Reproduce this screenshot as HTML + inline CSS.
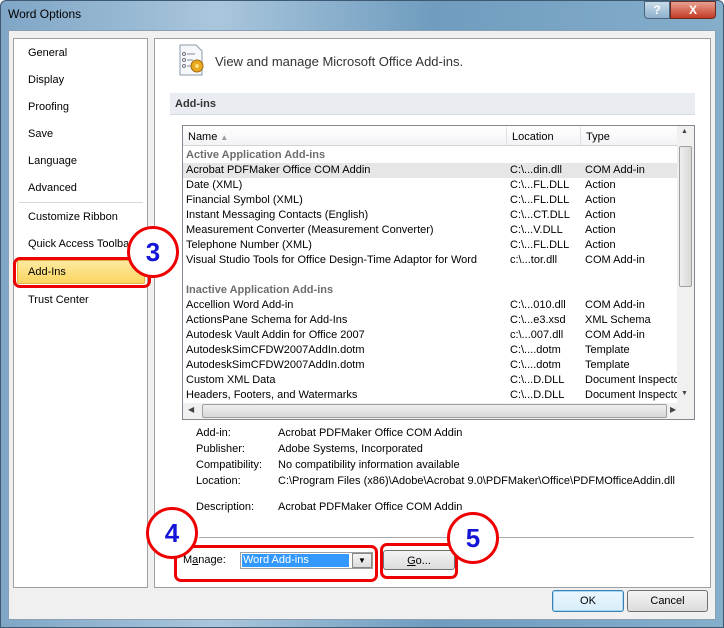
<!DOCTYPE html><html><head><style>
*{margin:0;padding:0;box-sizing:border-box}
body{width:724px;height:628px;overflow:hidden;font-family:"Liberation Sans",sans-serif;font-size:11px;color:#000;position:relative;background:#fff}
.a{position:absolute}
.frame{left:0;top:0;width:724px;height:628px;background:linear-gradient(90deg,#7fa6c6,#a9c6dc 30%,#6f9cbf 60%,#85aecb);border:1px solid #3d5a72;border-radius:6px 6px 0 0}
.inner{left:8px;top:30px;width:708px;height:590px;background:#f0f0f0;border:1px solid #8aa0b4}
.panel{background:#fff;border:1px solid #a0a0a0}
.nav{left:28px;font-size:11px}
.row{position:absolute;left:186px;height:15px;line-height:15px;white-space:nowrap}
.loc{position:absolute;left:510px}
.typ{position:absolute;left:585px}
.circle{width:52px;height:52px;border:3px solid #e00;border-radius:50%;background:#fff;color:#1515d8;font:bold 26px "Liberation Sans",sans-serif;text-align:center;line-height:46px}
.btn{border:1px solid #707070;border-radius:3px;background:linear-gradient(#f4f4f4,#dcdcdc);text-align:center;line-height:20px}
.redbox{border:3px solid #e00;border-radius:7px}
</style></head><body>
<div class="a frame"></div>
<div class="a" style="left:8px;top:7px;font-size:12px">Word Options</div>
<div class="a" style="left:644px;top:1px;width:26px;height:18px;border:1px solid #4a6580;border-radius:0 0 0 4px;background:linear-gradient(#c8dbea,#8eb0cc);color:#fff;text-align:center;font-weight:bold;font-size:12px;line-height:16px">?</div>
<div class="a" style="left:670px;top:1px;width:46px;height:18px;border:1px solid #6b2a20;border-radius:0 0 4px 0;background:linear-gradient(#e8a090,#c43b24);color:#fff;text-align:center;font-weight:bold;font-size:12px;line-height:16px">X</div>
<div class="a inner"></div>
<div class="a panel" style="left:13px;top:38px;width:135px;height:550px"></div>
<div class="a panel" style="left:154px;top:38px;width:557px;height:550px"></div>
<div class="a nav" style="top:47px">General</div>
<div class="a nav" style="top:74px">Display</div>
<div class="a nav" style="top:101px">Proofing</div>
<div class="a nav" style="top:128px">Save</div>
<div class="a nav" style="top:155px">Language</div>
<div class="a nav" style="top:182px">Advanced</div>
<div class="a" style="left:19px;top:202px;width:124px;border-top:1px solid #d8d8d8"></div>
<div class="a nav" style="top:211px">Customize Ribbon</div>
<div class="a nav" style="top:238px;width:100px;overflow:hidden;white-space:nowrap">Quick Access Toolbar</div>
<div class="a" style="left:17px;top:260px;width:128px;height:24px;border:1px solid #e0b040;border-radius:2px;background:linear-gradient(#fde9a0,#fbd560)"></div>
<div class="a nav" style="top:266px">Add-Ins</div>
<div class="a redbox" style="left:13px;top:257px;width:138px;height:31px"></div>
<div class="a nav" style="top:294px">Trust Center</div>
<svg class="a" style="left:178px;top:44px" width="30" height="32"><path d="M2 1h16l6 6v24H2z" fill="#f6f8fb" stroke="#8a99aa"/><circle cx="6" cy="10" r="1.5" fill="none" stroke="#778"/><circle cx="6" cy="16" r="1.5" fill="none" stroke="#778"/><circle cx="6" cy="22" r="1.5" fill="none" stroke="#778"/><path d="M9 10h8M9 16h6M9 22h4" stroke="#889"/><circle cx="19" cy="22" r="6" fill="#e8a820" stroke="#a06a10"/><circle cx="19" cy="22" r="2" fill="#fde080"/></svg>
<div class="a" style="left:215px;top:54px;font-size:13px;color:#333">View and manage Microsoft Office Add-ins.</div>
<div class="a" style="left:170px;top:93px;width:525px;height:22px;background:#e9ecf0;border-bottom:1px solid #d8dce0;font-weight:bold;padding:5px 5px;color:#333">Add-ins</div>
<div class="a" style="left:182px;top:125px;width:513px;height:295px;border:1px solid #828790;background:#fff"></div>
<div class="a" style="left:183px;top:126px;width:494px;height:20px;background:linear-gradient(#fff,#f2f3f5);border-bottom:1px solid #d5d5d5"></div>
<div class="a" style="left:506px;top:127px;height:18px;border-left:1px solid #e0e0e0"></div>
<div class="a" style="left:580px;top:127px;height:18px;border-left:1px solid #e0e0e0"></div>
<div class="a" style="left:188px;top:131px">Name <span style="color:#999;font-size:8px">▲</span></div>
<div class="a" style="left:512px;top:131px">Location</div>
<div class="a" style="left:586px;top:131px">Type</div>
<div class="a" style="left:183px;top:163px;width:494px;height:15px;background:#e6e6e6"></div>
<div class="row" style="top:148px;color:#6d6d6d;font-weight:bold">Active Application Add-ins</div>
<div class="row" style="top:163px">Acrobat PDFMaker Office COM Addin<span class="loc" style="left:324px">C:\...din.dll</span><span class="typ" style="left:399px">COM Add-in</span></div>
<div class="row" style="top:178px">Date (XML)<span class="loc" style="left:324px">C:\...FL.DLL</span><span class="typ" style="left:399px">Action</span></div>
<div class="row" style="top:193px">Financial Symbol (XML)<span class="loc" style="left:324px">C:\...FL.DLL</span><span class="typ" style="left:399px">Action</span></div>
<div class="row" style="top:208px">Instant Messaging Contacts (English)<span class="loc" style="left:324px">C:\...CT.DLL</span><span class="typ" style="left:399px">Action</span></div>
<div class="row" style="top:223px">Measurement Converter (Measurement Converter)<span class="loc" style="left:324px">C:\...V.DLL</span><span class="typ" style="left:399px">Action</span></div>
<div class="row" style="top:238px">Telephone Number (XML)<span class="loc" style="left:324px">C:\...FL.DLL</span><span class="typ" style="left:399px">Action</span></div>
<div class="row" style="top:253px">Visual Studio Tools for Office Design-Time Adaptor for Word<span class="loc" style="left:324px">c:\...tor.dll</span><span class="typ" style="left:399px">COM Add-in</span></div>
<div class="row" style="top:283px;color:#6d6d6d;font-weight:bold">Inactive Application Add-ins</div>
<div class="row" style="top:298px">Accellion Word Add-in<span class="loc" style="left:324px">C:\...010.dll</span><span class="typ" style="left:399px">COM Add-in</span></div>
<div class="row" style="top:313px">ActionsPane Schema for Add-Ins<span class="loc" style="left:324px">C:\...e3.xsd</span><span class="typ" style="left:399px">XML Schema</span></div>
<div class="row" style="top:328px">Autodesk Vault Addin for Office 2007<span class="loc" style="left:324px">c:\...007.dll</span><span class="typ" style="left:399px">COM Add-in</span></div>
<div class="row" style="top:343px">AutodeskSimCFDW2007AddIn.dotm<span class="loc" style="left:324px">C:\....dotm</span><span class="typ" style="left:399px">Template</span></div>
<div class="row" style="top:358px">AutodeskSimCFDW2007AddIn.dotm<span class="loc" style="left:324px">C:\....dotm</span><span class="typ" style="left:399px">Template</span></div>
<div class="row" style="top:373px">Custom XML Data<span class="loc" style="left:324px">C:\...D.DLL</span><span class="typ" style="left:399px;width:92px;overflow:hidden">Document Inspector</span></div>
<div class="row" style="top:388px">Headers, Footers, and Watermarks<span class="loc" style="left:324px">C:\...D.DLL</span><span class="typ" style="left:399px;width:92px;overflow:hidden">Document Inspector</span></div>
<div class="a" style="left:677px;top:126px;width:17px;height:277px;background:#f0f0f0"></div>
<div class="a" style="left:679px;top:146px;width:13px;height:141px;border:1px solid #a0a0a0;border-radius:2px;background:linear-gradient(90deg,#eee,#d8d8d8)"></div>
<div class="a" style="left:681px;top:128px;font-size:7px;color:#444">▲</div>
<div class="a" style="left:681px;top:390px;font-size:7px;color:#444">▼</div>
<div class="a" style="left:183px;top:403px;width:494px;height:16px;background:#f0f0f0"></div>
<div class="a" style="left:202px;top:404px;width:465px;height:14px;border:1px solid #a0a0a0;border-radius:2px;background:linear-gradient(#eee,#d8d8d8)"></div>
<div class="a" style="left:188px;top:405px;font-size:8px;color:#444">◀</div>
<div class="a" style="left:670px;top:405px;font-size:8px;color:#444">▶</div>
<div class="a" style="left:677px;top:403px;width:17px;height:16px;background:#f0f0f0"></div>
<div class="a" style="left:196px;top:425px;line-height:16px">Add-in:<br>Publisher:<br>Compatibility:<br>Location:</div>
<div class="a" style="left:278px;top:425px;line-height:16px">Acrobat PDFMaker Office COM Addin<br>Adobe Systems, Incorporated<br>No compatibility information available<br>C:\Program Files (x86)\Adobe\Acrobat 9.0\PDFMaker\Office\PDFMOfficeAddin.dll</div>
<div class="a" style="left:196px;top:501px">Description:</div>
<div class="a" style="left:278px;top:501px">Acrobat PDFMaker Office COM Addin</div>
<div class="a" style="left:199px;top:537px;width:495px;border-top:1px solid #aaa"></div>
<div class="a" style="left:183px;top:554px">M<u>a</u>nage:</div>
<div class="a" style="left:240px;top:552px;width:133px;height:17px;border:1px solid #a0a0a0;background:#fff"></div>
<div class="a" style="left:242px;top:554px;width:107px;height:13px;background:#3399ff;color:#fff;line-height:13px;padding-left:1px">Word Add-ins</div>
<div class="a" style="left:352px;top:553px;width:20px;height:15px;border:1px solid #888;background:linear-gradient(#f4f4f4,#dcdcdc);font-size:8px;text-align:center;line-height:14px">▼</div>
<div class="a btn" style="left:383px;top:550px;width:72px;height:20px"><u>G</u>o...</div>
<div class="a redbox" style="left:174px;top:545px;width:204px;height:37px"></div>
<div class="a redbox" style="left:380px;top:543px;width:78px;height:36px"></div>
<div class="a btn" style="left:552px;top:590px;width:72px;height:22px;border-color:#3c7fb1;background:linear-gradient(#eaf6fd,#d7eefb);box-shadow:inset 0 0 0 1px #a6d8f5">OK</div>
<div class="a btn" style="left:627px;top:590px;width:81px;height:22px">Cancel</div>
<div class="a circle" style="left:127px;top:226px">3</div>
<div class="a circle" style="left:146px;top:507px">4</div>
<div class="a circle" style="left:447px;top:512px">5</div>
</body></html>
